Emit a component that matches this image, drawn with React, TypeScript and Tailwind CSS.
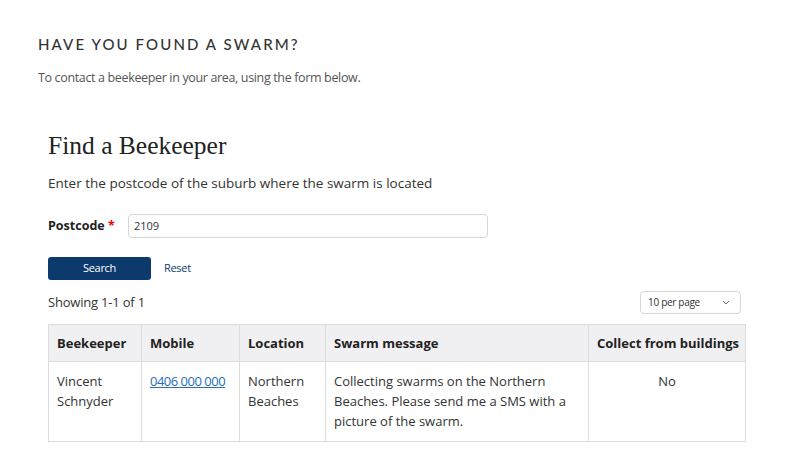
import React from "react";

const sans = { fontFamily: '"Open Sans", "Noto Sans", sans-serif' };

export default function App() {
  return (
    <div className="w-[800px] h-[462px] bg-white overflow-hidden text-[#333]" style={sans}>
      <div className="pl-[38px] pt-[34px]">
        <h2 className="text-[15px] leading-[20px] font-medium tracking-[2.1px] text-[#333] font-['Lato',sans-serif]">
          HAVE YOU FOUND A SWARM?
        </h2>
        <p className="mt-[16px] text-[12.5px] leading-[16px] text-[#555] tracking-[-0.35px]">
          To contact a beekeeper in your area, using the form below.
        </p>
      </div>
      <div className="pl-[48px] pr-[55px] pt-[44px]">
        <h1 className="text-[25.5px] leading-[32px] text-[#222] font-['Liberation_Serif',serif]">Find a Beekeeper</h1>
        <p className="mt-[12px] text-[13.5px] leading-[18px] text-[#333]">
          Enter the postcode of the suburb where the swarm is located
        </p>
        <div className="mt-[22px] flex items-center">
          <label className="w-[80px] text-[12.5px] font-bold text-[#222]">
            Postcode <span className="text-[#e00]">*</span>
          </label>
          <div className="w-[360px] h-[24px] border border-[#d6d6d6] rounded-[4px] flex items-center px-[5px] text-[11px] text-[#333]">
            2109
          </div>
        </div>
        <div className="mt-[19px] flex items-center">
          <button className="w-[103px] h-[23px] rounded-[3px] bg-[#0c3a6d] text-white text-[11px] tracking-[-0.3px]">
            Search
          </button>
          <span className="ml-[13px] text-[11px] text-[#0c3a6d] tracking-[-0.3px]">Reset</span>
        </div>
        <div className="mt-[11px] flex items-center justify-between pr-[4px]">
          <span className="text-[13px] text-[#333] tracking-[-0.2px]">Showing 1-1 of 1</span>
          <div className="w-[101px] h-[23px] border border-[#d6d6d6] rounded-[4px] flex items-center justify-between pl-[7px] pr-[10px] text-[10px] text-[#333] tracking-[-0.3px]">
            <span>10 per page</span>
            <svg width="8" height="5" viewBox="0 0 8 5" fill="none">
              <path d="M1 1l3 3 3-3" stroke="#666" strokeWidth="1" />
            </svg>
          </div>
        </div>
        <table className="mt-[10px] w-[697px] border-collapse text-[13px] leading-[20px] table-fixed">
          <colgroup>
            <col className="w-[93px]" />
            <col className="w-[98px]" />
            <col className="w-[86px]" />
            <col className="w-[263px]" />
            <col className="w-[157px]" />
          </colgroup>
          <thead>
            <tr className="bg-[#f0f0f2] h-[37px]">
              <th className="border border-[#dcdcdc] text-left font-bold px-[8px] text-[#222]">Beekeeper</th>
              <th className="border border-[#dcdcdc] text-left font-bold px-[8px] text-[#222]">Mobile</th>
              <th className="border border-[#dcdcdc] text-left font-bold px-[8px] text-[#222]">Location</th>
              <th className="border border-[#dcdcdc] text-left font-bold px-[8px] text-[#222]">Swarm message</th>
              <th className="border border-[#dcdcdc] text-left font-bold px-[8px] text-[#222] whitespace-nowrap">Collect from buildings</th>
            </tr>
          </thead>
          <tbody>
            <tr className="h-[80px] align-top">
              <td className="border border-[#dcdcdc] px-[8px] pt-[9px] text-[#333]">Vincent Schnyder</td>
              <td className="border border-[#dcdcdc] px-[8px] pt-[9px]">
                <a className="text-[#2a6db3] underline whitespace-nowrap tracking-[-0.5px]">0406 000 000</a>
              </td>
              <td className="border border-[#dcdcdc] px-[8px] pt-[9px] text-[#333]">Northern Beaches</td>
              <td className="border border-[#dcdcdc] px-[8px] pt-[9px] text-[#333]">
                Collecting swarms on the Northern Beaches. Please send me a SMS with a picture of the swarm.
              </td>
              <td className="border border-[#dcdcdc] px-[8px] pt-[9px] text-center text-[#333]">No</td>
            </tr>
          </tbody>
        </table>
      </div>
    </div>
  );
}
